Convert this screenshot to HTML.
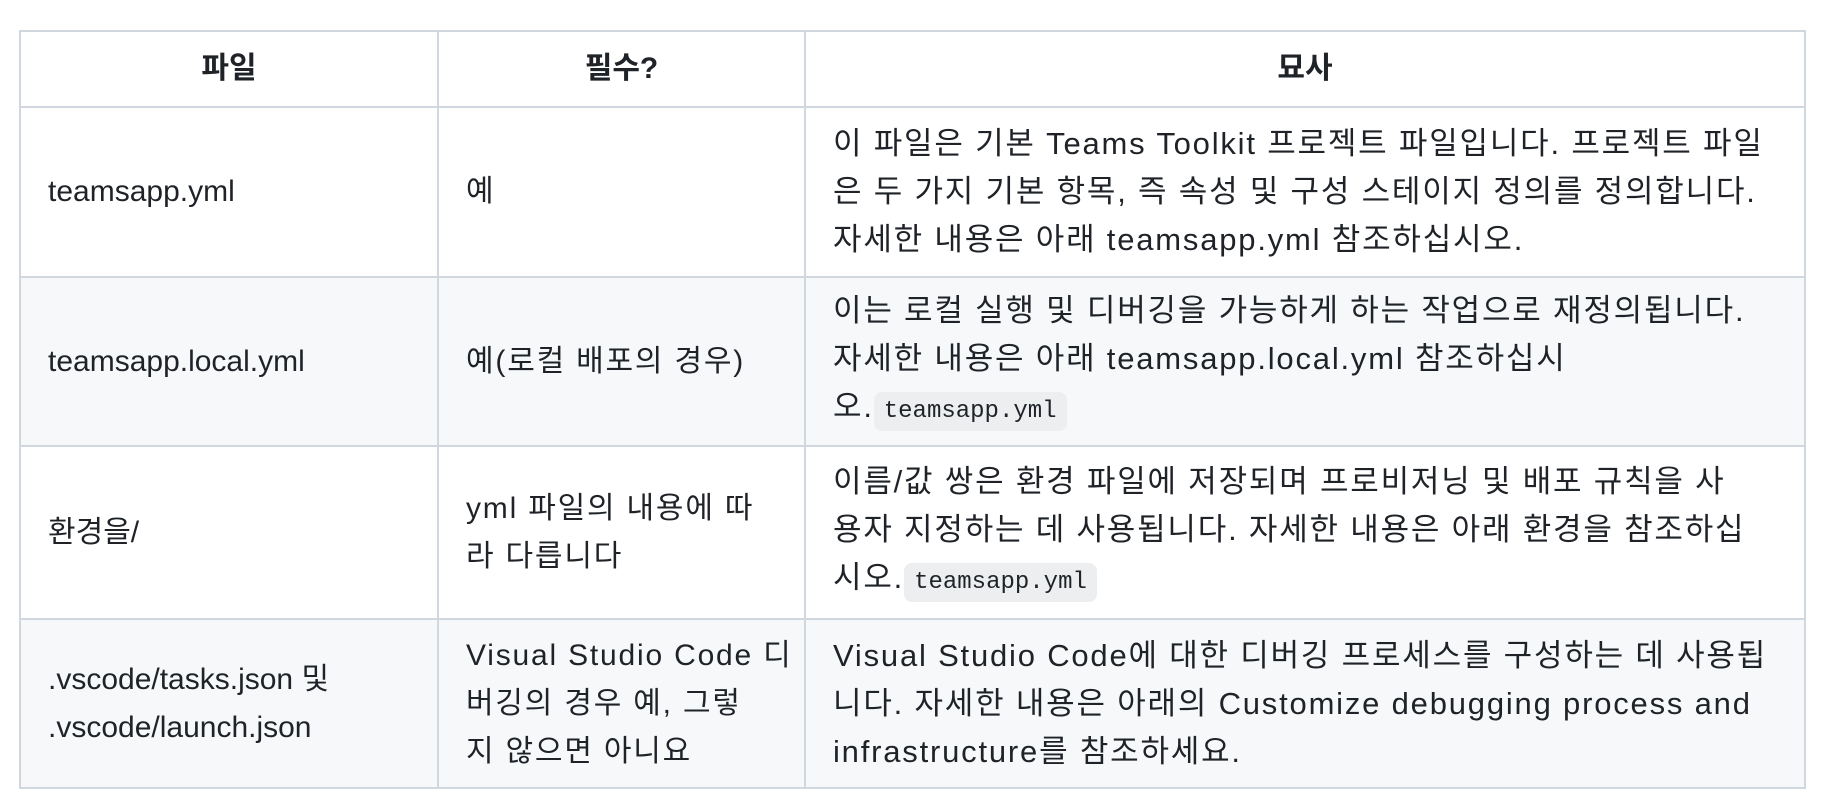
<!DOCTYPE html>
<html><head><meta charset="utf-8"><style>
body{margin:0;background:#fff;width:1823px;height:803px;overflow:hidden}
table{position:absolute;left:19px;top:30px;width:1785px;border-collapse:collapse;table-layout:fixed;font-family:"Liberation Sans","Noto Sans CJK KR",sans-serif;font-size:30px;line-height:48px;color:#1f2328}
td,th{border:2px solid #d0d7de;padding:0 27px;vertical-align:middle;white-space:nowrap;overflow:visible;box-sizing:border-box}
td.k{font-size:31px;letter-spacing:1.8px}
td.m{letter-spacing:1.8px}
th{font-weight:bold;text-align:center}
tr.alt td{background:#f6f8fa}
code{font-family:"Liberation Mono",monospace;font-size:24px;letter-spacing:0;background:#eceef0;border-radius:8px;padding:6px 10px;}
</style></head><body>
<table>
<colgroup><col style="width:418px"><col style="width:367px"><col style="width:1000px"></colgroup>
<tr style="height:76px"><th>파일</th><th>필수?</th><th>묘사</th></tr>
<tr style="height:170px"><td>teamsapp.yml</td><td class="m">예</td><td class="k">이 파일은 기본 Teams Toolkit 프로젝트 파일입니다. 프로젝트 파일<br>은 두 가지 기본 항목, 즉 속성 및 구성 스테이지 정의를 정의합니다.<br>자세한 내용은 아래 teamsapp.yml 참조하십시오.</td></tr>
<tr class="alt" style="height:169px"><td>teamsapp.local.yml</td><td class="m">예(로컬 배포의 경우)</td><td class="k">이는 로컬 실행 및 디버깅을 가능하게 하는 작업으로 재정의됩니다.<br>자세한 내용은 아래 teamsapp.local.yml 참조하십시<br>오.<code>teamsapp.yml</code></td></tr>
<tr style="height:173px"><td>환경을/</td><td class="m">yml 파일의 내용에 따<br>라 다릅니다</td><td class="k">이름/값 쌍은 환경 파일에 저장되며 프로비저닝 및 배포 규칙을 사<br>용자 지정하는 데 사용됩니다. 자세한 내용은 아래 환경을 참조하십<br>시오.<code>teamsapp.yml</code></td></tr>
<tr class="alt" style="height:169px"><td>.vscode/tasks.json 및<br>.vscode/launch.json</td><td class="m">Visual Studio Code 디<br>버깅의 경우 예, 그렇<br>지 않으면 아니요</td><td class="k">Visual Studio Code에 대한 디버깅 프로세스를 구성하는 데 사용됩<br>니다. 자세한 내용은 아래의 Customize debugging process and<br>infrastructure를 참조하세요.</td></tr>
</table>
</body></html>
